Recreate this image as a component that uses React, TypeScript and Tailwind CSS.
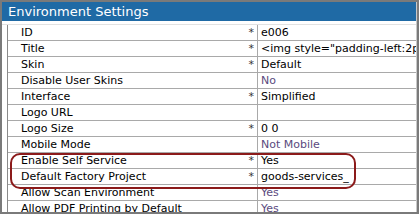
import React from 'react';

type Row = { label: string; value: string; required: boolean };

const rows: Row[] = [
  { label: 'ID', value: 'e006', required: true },
  { label: 'Title', value: '<img style="padding-left:2px" src="logo.png">', required: true },
  { label: 'Skin', value: 'Default', required: true },
  { label: 'Disable User Skins', value: 'No', required: false },
  { label: 'Interface', value: 'Simplified', required: true },
  { label: 'Logo URL', value: '', required: false },
  { label: 'Logo Size', value: '0 0', required: true },
  { label: 'Mobile Mode', value: 'Not Mobile', required: false },
  { label: 'Enable Self Service', value: 'Yes', required: true },
  { label: 'Default Factory Project', value: 'goods-services_', required: true },
  { label: 'Allow Scan Environment', value: 'Yes', required: false },
  { label: 'Allow PDF Printing by Default', value: 'Yes', required: false },
];

export default function App() {
  return (
    <div
      className="w-[419px] h-[214px] overflow-hidden bg-[#7a7a7a] pt-[2px] pl-[2px] pr-[2px] pb-[2px]"
      style={{ fontFamily: '"DejaVu Sans", Verdana, sans-serif' }}
    >
      <div className="relative h-full bg-white flex flex-col overflow-hidden border-r border-[#c8c8c8]">
        <div className="h-[19px] shrink-0 bg-[#1f6aa5] text-white text-[13px] leading-[19px] pl-[6px]">
          Environment Settings
        </div>
        <div className="h-[4px] shrink-0 border-b border-[#e2e2e2]" />

        <div className="ml-[5px] border-l border-[#8a8a8a] flex-1">
          {rows.map((r) => (
            <div
              key={r.label}
              className="h-[16px] flex items-center border-b border-[#a9a9a9] text-[11px] leading-[15px] whitespace-nowrap"
            >
              <div className="flex-1 pl-[13px] text-black overflow-hidden">{r.label}</div>
              <div className="w-[10px] text-right pr-[3px] text-[#333]">{r.required ? '*' : ''}</div>
              <div
                className={
                  'w-[159px] h-full border-l border-[#a9a9a9] pl-[3px] overflow-hidden ' +
                  (r.required ? 'text-black' : 'text-[#5b4a7e]')
                }
              >
                {r.value}
              </div>
            </div>
          ))}
        </div>

        <div className="absolute left-[8px] top-[151px] w-[346px] h-[36px] rounded-[10px] border-2 border-[#8b1a1a]" />
      </div>
    </div>
  );
}
